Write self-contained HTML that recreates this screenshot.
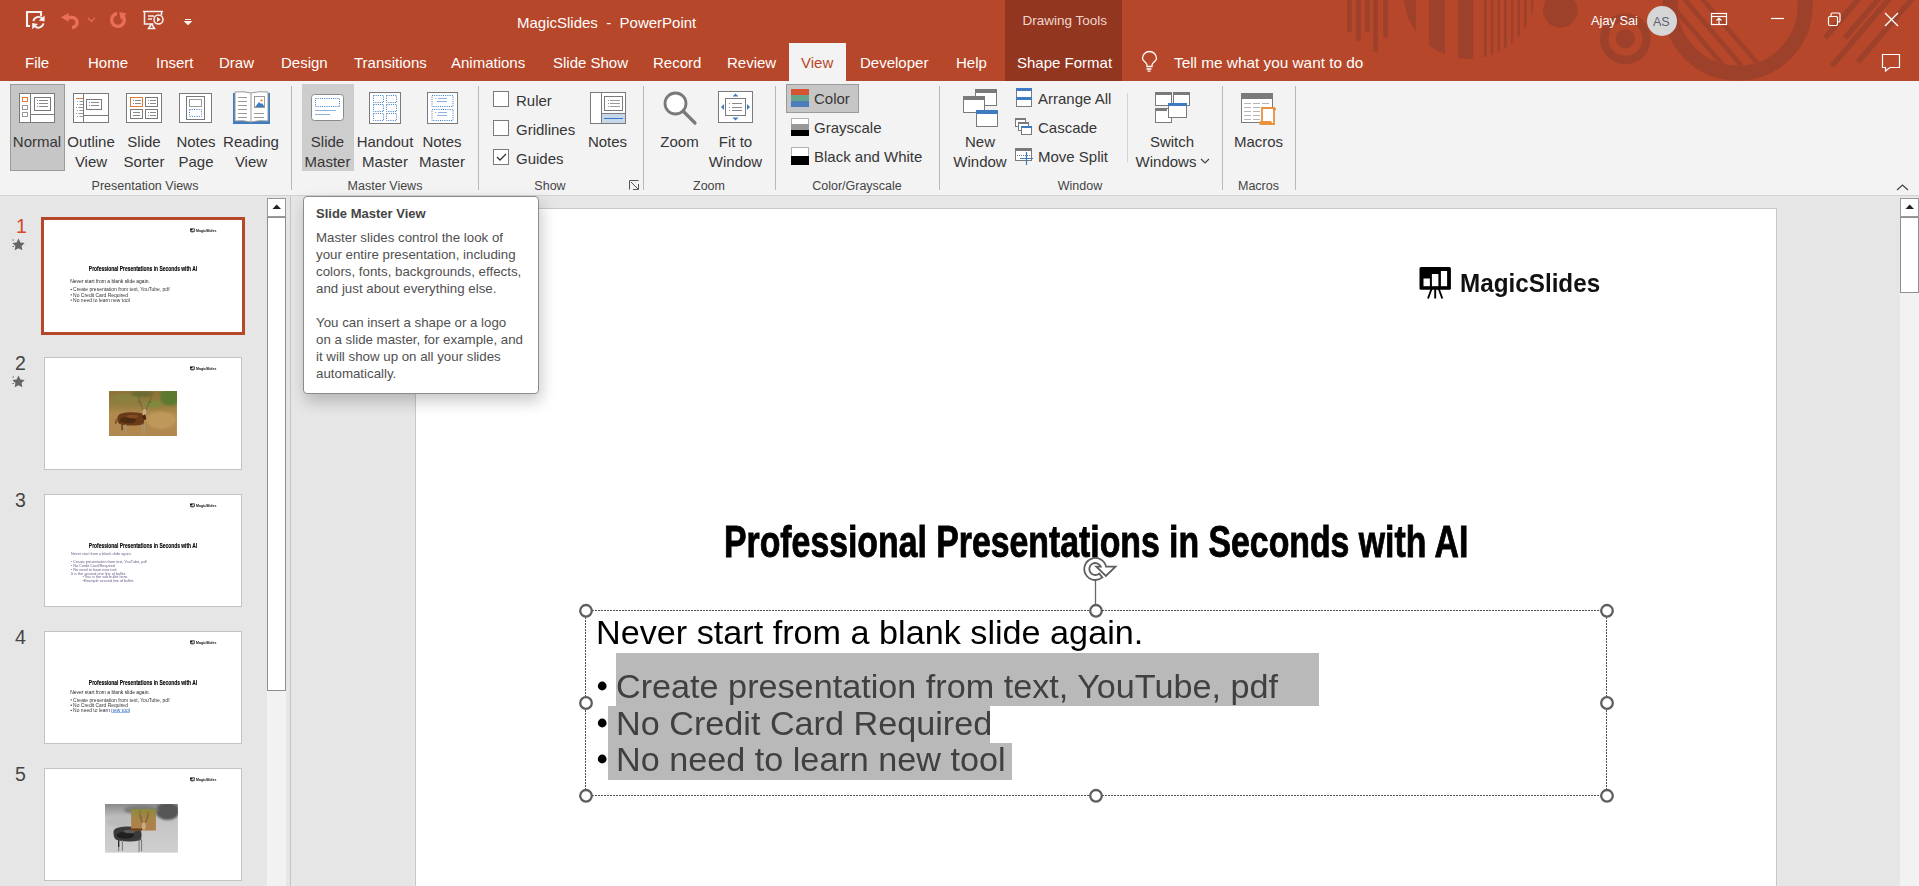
<!DOCTYPE html>
<html><head><meta charset="utf-8">
<style>
*{margin:0;padding:0;box-sizing:border-box}
html,body{width:1919px;height:886px;overflow:hidden;background:#e6e6e6;font-family:"Liberation Sans",sans-serif;position:relative}
.a{position:absolute}
.t{position:absolute;white-space:nowrap;line-height:1}
#top{left:0;top:0;width:1919px;height:81px;background:#b7472a;overflow:hidden}
.tab{position:absolute;top:55px;font-size:15px;color:#fff;line-height:1}
#ribbon{left:0;top:81px;width:1919px;height:115px;background:#f3f3f3;border-bottom:1px solid #d2d2d2}
.lbl{position:absolute;top:179px;font-size:12.5px;color:#444;line-height:1}
.btxt{position:absolute;font-size:15px;color:#444;line-height:20px;text-align:center;white-space:nowrap}
.c{transform:translateX(-50%);font-size:15px;color:#363636}
.rb{font-size:15px;color:#363636}
.lb{top:180px;font-size:12.5px;color:#444}
.num{font-size:19.5px;color:#444}
.thumb{position:absolute;width:198px;height:112px;background:#fff;overflow:hidden}
.thumb.bd{border:1px solid #c3c3c3;width:198px;height:113px}
.thumb.bd .sl{left:-0.7px}
.sl{position:absolute;left:0;top:0;width:1360px;height:765px;transform:scale(0.1456);transform-origin:0 0}
.tipb{font-size:13px;font-weight:700;color:#444}
.tip{font-size:13.3px;color:#505050;line-height:17.05px;white-space:nowrap}
.sep{position:absolute;top:88px;width:1px;height:104px;background:#c8c8c8}
</style></head><body>
<div id="top" class="a">
<svg class="a" style="left:0;top:0" width="1919" height="81">
<g fill="#9d412b">
<rect x="1347" y="0" width="4.7" height="31.7"/><rect x="1356" y="0" width="4.8" height="40.8"/><rect x="1365" y="0" width="4.7" height="31.7"/><rect x="1373.2" y="0" width="4.7" height="51.7"/><rect x="1383.3" y="0" width="4.7" height="37.5"/>
</g>
<defs><clipPath id="hc"><circle cx="1469.5" cy="-6.9" r="65.9"/></clipPath>
<clipPath id="bc"><circle cx="1737.7" cy="5.6" r="60"/></clipPath></defs>
<g fill="#9d412b" clip-path="url(#hc)">
<rect x="1400" y="-10" width="15.8" height="80"/>
<rect x="1429" y="-10" width="16" height="80"/>
<rect x="1458" y="-10" width="15.3" height="80"/>
<rect x="1484" y="-10" width="2.7" height="80"/><rect x="1490.8" y="-10" width="2.5" height="80"/><rect x="1497.5" y="-10" width="2.5" height="80"/><rect x="1504" y="-10" width="2.7" height="80"/><rect x="1511" y="-10" width="2.3" height="80"/><rect x="1517.5" y="-10" width="2.5" height="80"/><rect x="1524" y="-10" width="2.7" height="80"/><rect x="1531" y="-10" width="2.3" height="80"/>
</g>
<circle cx="1560.3" cy="10.25" r="17.25" fill="#9d412b"/>
<circle cx="1625.4" cy="38.75" r="21.25" fill="none" stroke="#9d412b" stroke-width="8.3"/>
<circle cx="1625.4" cy="38.75" r="9.6" fill="#9d412b"/>
<circle cx="1737.7" cy="5.6" r="67.5" fill="none" stroke="#9d412b" stroke-width="15"/>
<g stroke="#9d412b" stroke-width="4.5" clip-path="url(#bc)">
<line x1="1650" y1="-20" x2="1740" y2="85"/><line x1="1668" y1="-20" x2="1758" y2="85"/><line x1="1686" y1="-20" x2="1776" y2="85"/><line x1="1650" y1="10" x2="1720" y2="92"/><line x1="1650" y1="28" x2="1700" y2="86"/>
</g>
<g stroke="#9d412b" stroke-width="5.5">
<line x1="1825" y1="38" x2="1862" y2="-5"/><line x1="1845" y1="38" x2="1882" y2="-5"/><line x1="1832" y1="66" x2="1900" y2="-14"/><line x1="1858" y1="62" x2="1930" y2="-22"/>
</g>
<!-- QAT -->
<path d="M30 26 H27 V12 H41 V18" fill="none" stroke="#f3f3f3" stroke-width="2.1"/>
<circle cx="38.4" cy="22.3" r="6.8" fill="#b7472a"/>
<g fill="none" stroke="#f3f3f3" stroke-width="1.9">
<path d="M33.4 21.2 A5.1 5.1 0 0 1 42.2 18.6"/><path d="M43.4 23.4 A5.1 5.1 0 0 1 34.6 26"/>
</g>
<path d="M44.6 15.5 L44.6 21.6 L38.8 20.6z M32.2 29.2 L32.2 23 L38 24z" fill="#f3f3f3"/>
<path d="M64 17.4 H72 A5.1 5.1 0 0 1 72 27.6" fill="none" stroke="#e96f58" stroke-width="3.5"/>
<path d="M61 17.35 L68.6 13 L68.6 21.8z" fill="#e96f58"/>
<path d="M87.8 17.9 L91.4 21.4 L94.9 17.9" fill="none" stroke="#e96f58" stroke-width="1.3"/>
<path d="M117.02 13.71 A6.35 6.35 0 1 0 121.98 15.14" fill="none" stroke="#e96f58" stroke-width="3.3"/>
<path d="M119.2 12 L126.6 13.6 L120.8 19.8z" fill="#e96f58"/>
<g fill="none" stroke="#f3f3f3" stroke-width="1.5">
<path d="M143 11.5 h20"/><path d="M144.5 12 v12 h9"/><path d="M161.5 12 v3"/>
<path d="M148 16 h6 M148 19 h4"/>
<circle cx="158.5" cy="19.5" r="4.5"/>
<path d="M148.5 28.5 l2.5 -4 h1 l2.5 4z"/>
</g>
<path d="M157 17 v5 l3.5 -2.5z" fill="#f3f3f3"/>
<path d="M185 19.5 h6 M185 21.5 l3 3 l3 -3z" stroke="#f3f3f3" stroke-width="1.2" fill="#f3f3f3"/>
<!-- window controls -->
<g fill="none" stroke="#fff" stroke-width="1.2">
<rect x="1711.5" y="13.5" width="15" height="11"/><path d="M1711.5 16.5 h15"/><path d="M1719 24 v-6 M1716.5 20.5 l2.5 -2.5 l2.5 2.5"/>
<path d="M1771 18.5 h13"/>
<rect x="1828.5" y="16.5" width="9" height="9" rx="1.5"/><path d="M1831 16 v-1.5 a1.5 1.5 0 0 1 1.5 -1.5 h6 a1.5 1.5 0 0 1 1.5 1.5 v6 a1.5 1.5 0 0 1 -1.5 1.5 h-1"/>
<path d="M1885 13 l13 13 M1898 13 l-13 13" stroke-width="1.4"/>
<path d="M1882.5 54.5 h17 v13 h-9.5 l-4.5 3.5 v-3.5 h-3z"/>
</g>
<circle cx="1662" cy="21" r="15" fill="#d6d6d6"/>
<!-- drawing tools box -->
<rect x="1005" y="0" width="117" height="81" fill="#923620"/>
<!-- lightbulb -->
<g fill="none" stroke="#fff" stroke-width="1.3">
<path d="M1147 66.5 v-1.5 c0 -2.5 -4.5 -4 -4.5 -6.5 a7 7 0 0 1 14 0 c0 2.5 -4.5 4 -4.5 6.5 v1.5 z"/><path d="M1146.5 69 h5 M1147.5 71.2 h3"/>
</g>
<!-- view tab -->
<rect x="789" y="43" width="57" height="38" fill="#f3f3f3"/>
</svg>
<div class="t" style="left:517px;top:15px;font-size:15px;color:#fff">MagicSlides&nbsp; - &nbsp;PowerPoint</div>
<div class="t" style="left:1022.5px;top:13.5px;font-size:13.5px;color:#f0d6cf">Drawing Tools</div>
<div class="t" style="left:1591px;top:15px;font-size:12.8px;color:#fff">Ajay Sai</div>
<div class="t" style="left:1653px;top:15.5px;font-size:12.5px;color:#5a6270">AS</div>
<div class="tab" style="left:25px">File</div>
<div class="tab" style="left:88px">Home</div>
<div class="tab" style="left:156px">Insert</div>
<div class="tab" style="left:219px">Draw</div>
<div class="tab" style="left:281px">Design</div>
<div class="tab" style="left:354px">Transitions</div>
<div class="tab" style="left:451px">Animations</div>
<div class="tab" style="left:553px">Slide Show</div>
<div class="tab" style="left:653px">Record</div>
<div class="tab" style="left:727px">Review</div>
<div class="tab" style="left:801px;color:#b7472a">View</div>
<div class="tab" style="left:860px">Developer</div>
<div class="tab" style="left:956px">Help</div>
<div class="tab" style="left:1017px">Shape Format</div>
<div class="tab" style="left:1174px;font-size:15.35px">Tell me what you want to do</div>
</div>

<div id="ribbon" class="a">
<svg class="a" style="left:0;top:0" width="1919" height="114" viewBox="0 81 1919 114">
<!-- selected boxes -->
<rect x="10.5" y="84.5" width="54" height="86" fill="#c6c6c6" stroke="#9a9a9a"/>
<rect x="302" y="84" width="52" height="87" fill="#cdcdcd"/>
<rect x="786.5" y="84.5" width="72" height="28" fill="#c6c6c6" stroke="#9a9a9a"/>
<!-- separators -->
<g fill="#b9b9b9">
<rect x="291" y="86" width="1" height="104"/><rect x="478" y="86" width="1" height="104"/><rect x="643" y="86" width="1" height="104"/><rect x="775" y="86" width="1" height="104"/><rect x="939" y="86" width="1" height="104"/><rect x="1222" y="86" width="1" height="104"/><rect x="1295" y="86" width="1" height="104"/>
</g>
<rect x="1127" y="93" width="1" height="69" fill="#d4d4d4"/>
<!-- Normal icon -->
<g fill="#fff" stroke="#7a7a7a" stroke-width="1">
<rect x="19.5" y="93.5" width="35" height="29"/>
</g>
<g fill="none" stroke="#7a7a7a" stroke-width="1">
<path d="M30.5 94 v28 M31 114.5 h23"/>
<rect x="34.5" y="97.5" width="16" height="13"/>
<path d="M37 100.5 h1 M39 100.5 h9 M37 103.5 h1 M39 103.5 h9 M37 106.5 h1 M39 106.5 h9" stroke="#8a8a8a"/>
<rect x="22.5" y="105.5" width="5" height="4" stroke="#9a9a9a"/>
<rect x="22.5" y="112.5" width="5" height="4" stroke="#9a9a9a"/>
</g>
<rect x="22.5" y="97.5" width="5" height="4" fill="none" stroke="#e07b39"/>
<!-- Outline icon -->
<g fill="#fff" stroke="#7a7a7a"><rect x="73.5" y="93.5" width="35" height="29"/></g>
<g fill="none" stroke="#7a7a7a">
<path d="M83.5 94 v28 M84 115.5 h24"/>
<rect x="86.5" y="99.5" width="15" height="10"/>
<path d="M89 102.5 h1 M91 102.5 h8 M89 105.5 h1 M91 105.5 h8" stroke="#8a8a8a"/>
<path d="M76 98.5 h7 M77 101.5 h6 M77 104.5 h6 M76 107.5 h7 M77 110.5 h6 M76 113.5 h7 M77 116.5 h6" stroke="#9a9a9a" stroke-dasharray="1 1.5 10"/>
</g>
<path d="M76 98.5 h7" stroke="#e07b39"/>
<!-- Slide sorter -->
<rect x="126.5" y="93.5" width="35" height="29" fill="#fff" stroke="#7a7a7a"/>
<rect x="130.5" y="97.5" width="12" height="9" fill="none" stroke="#e07b39"/>
<g fill="none" stroke="#7a7a7a"><rect x="145.5" y="97.5" width="12" height="9"/><rect x="130.5" y="109.5" width="12" height="9"/><rect x="145.5" y="109.5" width="12" height="9"/></g>
<path d="M133 100.5 h1 M135 100.5 h6 M133 103.5 h1 M135 103.5 h6 M148 100.5 h1 M150 100.5 h6 M148 103.5 h1 M150 103.5 h6 M133 112.5 h7 M133 115.5 h7 M148 112.5 h1 M150 112.5 h6 M148 115.5 h1 M150 115.5 h6" stroke="#8a8a8a"/>
<!-- Notes page -->
<rect x="179.5" y="93.5" width="32" height="29" fill="#fff" stroke="#7a7a7a"/>
<rect x="186.5" y="96.5" width="18" height="23" fill="#fff" stroke="#7a7a7a"/>
<rect x="189.5" y="99.5" width="12" height="7" fill="none" stroke="#9a9a9a"/>
<rect x="189.5" y="109.5" width="12" height="7" fill="none" stroke="#3b78c4" stroke-dasharray="1 1.3"/>
<!-- Reading view -->
<path d="M233 93 h3 v29 h34 v-29 h-1 v30 h-36z" fill="#3f7bc1"/>
<rect x="233" y="93" width="37" height="31" fill="#3f7bc1"/>
<path d="M235 92 q8 -1 16 1 q8 -2 17 -1 v29 q-9 -1 -17 1 q-8 -2 -16 -1z" fill="#fff" stroke="#9a9a9a"/>
<path d="M251 93 v29" stroke="#9a9a9a"/>
<path d="M238 97.5 h9 M238 101.5 h9 M238 105.5 h9 M238 109.5 h9 M238 113.5 h9 M238 117.5 h9 M254 113.5 h10 M254 117.5 h10" stroke="#9a9a9a"/>
<rect x="254.5" y="96.5" width="10" height="11" fill="#fff" stroke="#9a9a9a"/>
<path d="M255 107 l4 -5 l2 2 l1 -1 l2 3 v1z" fill="#3f7bc1"/>
<circle cx="261.5" cy="100.5" r="1.3" fill="#e8a657"/>
<!-- Slide master -->
<rect x="311.5" y="94.5" width="32" height="26" rx="3" fill="#fff" stroke="#8a8a8a"/>
<rect x="315.5" y="98.5" width="24" height="8" fill="none" stroke="#3b78c4" stroke-dasharray="1 1.2"/>
<path d="M315 110.5 h21 M315 114.5 h15" stroke="#8fb3df"/>
<!-- handout master -->
<rect x="369.5" y="92.5" width="31" height="31" fill="#fff" stroke="#7a7a7a"/>
<g fill="none" stroke="#3b78c4" stroke-dasharray="1 1.2">
<rect x="373.5" y="95.5" width="10" height="7"/><rect x="386.5" y="95.5" width="10" height="7"/>
<rect x="373.5" y="104.5" width="10" height="7"/><rect x="386.5" y="104.5" width="10" height="7"/>
<rect x="373.5" y="113.5" width="10" height="7"/><rect x="386.5" y="113.5" width="10" height="7"/>
</g>
<!-- notes master -->
<rect x="427.5" y="92.5" width="30" height="31" fill="#fff" stroke="#7a7a7a"/>
<g fill="none" stroke="#3b78c4" stroke-dasharray="1 1.2">
<rect x="432" y="95.5" width="21" height="11"/><rect x="432" y="109.5" width="21" height="11"/>
</g>
<path d="M435 98.5 h1 M438 98.5 h9 M437 101.5 h1 M438 101.5 h9 M435 112.5 h1 M438 112.5 h9 M437 115.5 h1 M438 115.5 h9" stroke="#8fb3df"/>
<!-- checkboxes -->
<g fill="#fff" stroke="#7a7a7a">
<rect x="493.5" y="91.5" width="15" height="15"/><rect x="493.5" y="120.5" width="15" height="15"/><rect x="493.5" y="149.5" width="15" height="15"/>
</g>
<path d="M497 157 l3 3 l6 -6" fill="none" stroke="#333" stroke-width="1.3"/>
<!-- notes icon -->
<rect x="590.5" y="92.5" width="35" height="31" fill="#fff" stroke="#7a7a7a"/>
<path d="M601.5 93 v30" stroke="#7a7a7a"/>
<rect x="602" y="114" width="23" height="9" fill="#c6d7ec"/>
<path d="M602 113.5 h23" stroke="#7a7a7a"/>
<path d="M604 118.5 h19" stroke="#3b78c4"/>
<rect x="604.5" y="96.5" width="18" height="14" fill="#fff" stroke="#7a7a7a"/>
<path d="M608 100.5 h1 M610 100.5 h10 M608 103.5 h1 M610 103.5 h10 M608 106.5 h1 M610 106.5 h10" stroke="#9a9a9a"/>
<!-- dialog launcher -->
<path d="M629.5 189.5 v-9 h9 M631 182 l7 7 M633 189.5 h5.5 v-5.5" fill="none" stroke="#555"/>
<!-- zoom -->
<circle cx="675.5" cy="103.5" r="10.5" fill="#fff" stroke="#7a7a7a" stroke-width="2.8"/>
<path d="M683 111 l12 12" stroke="#7a7a7a" stroke-width="3.2" stroke-linecap="round"/>
<!-- fit to window -->
<rect x="718.5" y="91.5" width="34" height="31" fill="#fff" stroke="#7a7a7a"/>
<rect x="725.5" y="98.5" width="20" height="17" fill="#fff" stroke="#7a7a7a"/>
<path d="M729 103.5 h1 M732 103.5 h10 M729 107.5 h1 M732 107.5 h10 M729 110.5 h1 M732 110.5 h10" stroke="#8a8a8a"/>
<path d="M735.5 93.5 l3 3 h-6z M735.5 120.5 l3 -3 h-6z M721 107 l3 -3 v6z M750 107 l-3 -3 v6z" fill="#3f7bc1"/>
<!-- color swatches -->
<rect x="791" y="89" width="18" height="6" fill="#d55332"/><rect x="791" y="95" width="18" height="6" fill="#67a48c"/><rect x="791" y="101" width="18" height="6" fill="#4a7db9"/>
<rect x="791.5" y="118.5" width="17" height="17" fill="#fff" stroke="#b0b0b0"/>
<rect x="791" y="124" width="18" height="6" fill="#999"/><rect x="791" y="130" width="18" height="6" fill="#000"/>
<rect x="791.5" y="147.5" width="17" height="17" fill="#fff" stroke="#b0b0b0"/>
<rect x="791" y="156" width="18" height="9" fill="#000"/>
<!-- new window -->
<g stroke="#7a7a7a" fill="#fff">
<rect x="975.5" y="89.5" width="21" height="16"/>
<rect x="963.5" y="96.5" width="21" height="16"/>
<rect x="976.5" y="110.5" width="21" height="16"/>
</g>
<rect x="975" y="89" width="22" height="4" fill="#7a7a7a"/><rect x="963" y="96" width="22" height="4" fill="#7a7a7a"/><rect x="976" y="110" width="22" height="4" fill="#3f7bc1"/>
<!-- arrange all -->
<rect x="1016.5" y="88.5" width="15" height="18" fill="#fff" stroke="#7a7a7a"/>
<rect x="1016" y="88" width="16" height="3" fill="#3f7bc1"/><rect x="1016" y="97" width="16" height="3" fill="#3f7bc1"/>
<!-- cascade -->
<g stroke="#7a7a7a" fill="#fff">
<rect x="1015.5" y="118.5" width="10" height="8"/><rect x="1018.5" y="122.5" width="10" height="8"/><rect x="1021.5" y="126.5" width="10" height="8"/>
</g>
<rect x="1015" y="118" width="11" height="2" fill="#7a7a7a"/><rect x="1018" y="122" width="11" height="2" fill="#7a7a7a"/><rect x="1021" y="126" width="11" height="2" fill="#3f7bc1"/>
<!-- move split -->
<rect x="1015.5" y="148.5" width="16" height="12" fill="#fff" stroke="#7a7a7a"/>
<rect x="1015" y="148" width="17" height="3" fill="#7a7a7a"/>
<path d="M1017 155.5 h13" stroke="#7a7a7a" stroke-dasharray="1 1"/>
<path d="M1026.5 152 v13 M1020 158.5 h13" stroke="#3f7bc1" stroke-width="1.2"/>
<!-- switch windows -->
<g stroke="#7a7a7a" fill="#fff">
<rect x="1155.5" y="92.5" width="16" height="13"/><rect x="1173.5" y="92.5" width="16" height="13"/><rect x="1155.5" y="108.5" width="16" height="14"/>
<rect x="1168.5" y="103.5" width="18" height="14"/>
</g>
<rect x="1155" y="92" width="17" height="3" fill="#7a7a7a"/><rect x="1173" y="92" width="17" height="3" fill="#7a7a7a"/><rect x="1155" y="108" width="12" height="3" fill="#7a7a7a"/><rect x="1168" y="103" width="19" height="3" fill="#3f7bc1"/>
<!-- macros -->
<rect x="1241.5" y="93.5" width="31" height="29" fill="#fff" stroke="#7a7a7a"/>
<rect x="1241" y="93" width="32" height="6" fill="#7a7a7a"/>
<path d="M1244 103.5 h26 M1244 107.5 h26 M1244 111.5 h26 M1244 115.5 h20 M1244 119.5 h18" stroke="#b5b5b5" stroke-dasharray="7 2"/>
<path d="M1262 108 h12 v16 h-12z" fill="#fff" stroke="#e8913e" stroke-width="1.8"/>
<rect x="1259" y="121" width="13" height="4" rx="2" fill="#e8913e"/>
<circle cx="1274.5" cy="109" r="1.5" fill="#e8913e"/>
<!-- collapse -->
<path d="M1897 190 l5.5 -5 l5.5 5" fill="none" stroke="#444" stroke-width="1.2"/>
</svg>
</div>
<div class="t c" style="left:37px;top:133.5px">Normal</div>
<div class="t c" style="left:91px;top:133.5px">Outline</div>
<div class="t c" style="left:91px;top:153.8px">View</div>
<div class="t c" style="left:144px;top:133.5px">Slide</div>
<div class="t c" style="left:144px;top:153.8px">Sorter</div>
<div class="t c" style="left:196px;top:133.5px">Notes</div>
<div class="t c" style="left:196px;top:153.8px">Page</div>
<div class="t c" style="left:251px;top:133.5px">Reading</div>
<div class="t c" style="left:251px;top:153.8px">View</div>
<div class="t c" style="left:327.5px;top:133.5px">Slide</div>
<div class="t c" style="left:327.5px;top:153.8px">Master</div>
<div class="t c" style="left:385px;top:133.5px">Handout</div>
<div class="t c" style="left:385px;top:153.8px">Master</div>
<div class="t c" style="left:442px;top:133.5px">Notes</div>
<div class="t c" style="left:442px;top:153.8px">Master</div>
<div class="t rb" style="left:516px;top:92.5px">Ruler</div>
<div class="t rb" style="left:516px;top:121.5px">Gridlines</div>
<div class="t rb" style="left:516px;top:150.5px">Guides</div>
<div class="t c" style="left:607.5px;top:133.5px">Notes</div>
<div class="t c" style="left:679.5px;top:133.5px">Zoom</div>
<div class="t c" style="left:735.5px;top:133.5px">Fit to</div>
<div class="t c" style="left:735.5px;top:153.8px">Window</div>
<div class="t rb" style="left:814px;top:91px">Color</div>
<div class="t rb" style="left:814px;top:120px">Grayscale</div>
<div class="t rb" style="left:814px;top:149px">Black and White</div>
<div class="t c" style="left:980px;top:133.5px">New</div>
<div class="t c" style="left:980px;top:153.8px">Window</div>
<div class="t rb" style="left:1038px;top:91px">Arrange All</div>
<div class="t rb" style="left:1038px;top:120px">Cascade</div>
<div class="t rb" style="left:1038px;top:149px">Move Split</div>
<div class="t c" style="left:1172px;top:133.5px">Switch</div>
<div class="t c" style="left:1166px;top:153.8px">Windows</div>
<svg class="a" style="left:1200px;top:157px" width="10" height="8"><path d="M1 2 l4 4 l4 -4" fill="none" stroke="#444" stroke-width="1.2"/></svg>
<div class="t c" style="left:1258.5px;top:133.5px">Macros</div>
<div class="t c lb" style="left:145px">Presentation Views</div>
<div class="t c lb" style="left:385px">Master Views</div>
<div class="t c lb" style="left:550px">Show</div>
<div class="t c lb" style="left:709px">Zoom</div>
<div class="t c lb" style="left:857px">Color/Grayscale</div>
<div class="t c lb" style="left:1080px">Window</div>
<div class="t c lb" style="left:1258.5px">Macros</div>

<!-- LOWER -->
<div class="a" style="left:0;top:196px;width:1919px;height:690px;background:#e6e6e6"></div>
<!-- left scrollbar -->
<div class="a" style="left:267px;top:198px;width:19px;height:688px;background:#f2f2f2"></div>
<div class="a" style="left:267px;top:198px;width:19px;height:19px;background:#fff;border:1px solid #9a9a9a"></div>
<svg class="a" style="left:272px;top:203px" width="10" height="7"><path d="M0.5 6 L4.7 1.5 L9 6z" fill="#222"/></svg>
<div class="a" style="left:267px;top:217px;width:19px;height:474px;background:#fff;border:1.2px solid #8f8f8f;border-top-width:1.5px"></div>
<div class="a" style="left:290px;top:196px;width:1px;height:690px;background:#c4c4c4"></div>
<!-- right scrollbar -->
<div class="a" style="left:1900px;top:198px;width:19px;height:688px;background:#f2f2f2"></div>
<div class="a" style="left:1900px;top:198px;width:19px;height:19px;background:#fff;border:1px solid #9a9a9a"></div>
<svg class="a" style="left:1905px;top:203px" width="10" height="7"><path d="M0.5 6 L4.7 1.5 L9 6z" fill="#222"/></svg>
<div class="a" style="left:1900px;top:217px;width:19px;height:76px;background:#fff;border:1.2px solid #8f8f8f;border-top-width:1.5px"></div>
<!-- slide numbers -->
<div class="t num" style="left:16px;top:216.5px;color:#d24726">1</div>
<div class="t num" style="left:15px;top:353.5px">2</div>
<div class="t num" style="left:15px;top:490.5px">3</div>
<div class="t num" style="left:15px;top:627.5px">4</div>
<div class="t num" style="left:15px;top:764.5px">5</div>
<svg class="a" style="left:11px;top:237px" width="16" height="14"><path d="M7.5 1.5 l1.9 3.9 l4.3 0.6 l-3.1 3 l0.7 4.2 l-3.8 -2 l-3.8 2 l0.7 -4.2 l-3.1 -3 l4.3 -0.6z" fill="#666"/><path d="M1.5 3 h1.5 M1.5 9.5 h1.5" stroke="#666" stroke-width="1"/></svg>
<svg class="a" style="left:11px;top:374px" width="16" height="14"><path d="M7.5 1.5 l1.9 3.9 l4.3 0.6 l-3.1 3 l0.7 4.2 l-3.8 -2 l-3.8 2 l0.7 -4.2 l-3.1 -3 l4.3 -0.6z" fill="#666"/><path d="M1.5 3 h1.5 M1.5 9.5 h1.5" stroke="#666" stroke-width="1"/></svg>
<!-- thumbnails -->
<div class="a" style="left:41px;top:217px;width:204px;height:118px;background:#b7472a"></div>
<div class="thumb" style="left:44px;top:220px"><div class="sl"><svg class="a" style="left:1000px;top:55px" width="40" height="40" viewBox="1000 55 40 40">
<rect x="1003.5" y="57.9" width="31.4" height="22.8" rx="1.5" fill="#000"/>
<rect x="1007.5" y="69.5" width="6.4" height="7.7" fill="#fff"/><rect x="1015.9" y="65" width="6.5" height="12.2" fill="#fff"/><rect x="1024.9" y="62" width="6.2" height="15.2" fill="#fff"/>
<path d="M1015.5 80 L1012 89.5 M1019.2 80 V89.5 M1022.8 80 L1026.3 89.5" stroke="#000" stroke-width="1.9"/>
</svg>
<div class="t" style="left:1043.7px;top:61.5px;font-size:25px;font-weight:700;color:#111;transform:scaleX(0.97);transform-origin:0 0">MagicSlides</div><div class="t" style="left:307.6px;top:309.7px;font-size:45px;font-weight:700;color:#000;-webkit-text-stroke:0.9px #000;transform:scaleX(0.751);transform-origin:0 0">Professional Presentations in Seconds with AI</div><div class="t" style="left:180.4px;top:407.1px;font-size:33px;transform:scaleX(1.036);transform-origin:0 0;color:#222">Never start from a blank slide again.</div>
<div class="t" style="left:200.4px;top:461.1px;font-size:33px;transform:scaleX(1.036);transform-origin:0 0;color:#333">Create presentation from text, YouTube, pdf</div>
<div class="t" style="left:200.4px;top:497.9px;font-size:33px;transform:scaleX(1.036);transform-origin:0 0;color:#333">No Credit Card Required</div>
<div class="t" style="left:200.4px;top:534.1px;font-size:33px;transform:scaleX(1.036);transform-origin:0 0;color:#333">No need to learn new tool</div>
<svg class="a" style="left:180px;top:470px" width="14" height="90"><circle cx="6.2" cy="7" r="4.4" fill="#000"/><circle cx="6.2" cy="44" r="4.4" fill="#000"/><circle cx="6.2" cy="80" r="4.4" fill="#000"/></svg></div></div>
<div class="thumb bd" style="left:44px;top:357px"><div class="sl"><svg class="a" style="left:1000px;top:55px" width="40" height="40" viewBox="1000 55 40 40">
<rect x="1003.5" y="57.9" width="31.4" height="22.8" rx="1.5" fill="#000"/>
<rect x="1007.5" y="69.5" width="6.4" height="7.7" fill="#fff"/><rect x="1015.9" y="65" width="6.5" height="12.2" fill="#fff"/><rect x="1024.9" y="62" width="6.2" height="15.2" fill="#fff"/>
<path d="M1015.5 80 L1012 89.5 M1019.2 80 V89.5 M1022.8 80 L1026.3 89.5" stroke="#000" stroke-width="1.9"/>
</svg>
<div class="t" style="left:1043.7px;top:61.5px;font-size:25px;font-weight:700;color:#111;transform:scaleX(0.97);transform-origin:0 0">MagicSlides</div><svg class="a" style="left:446px;top:227px" width="467" height="309" viewBox="0 0 467 309">
<defs><linearGradient id="dg" x1="0" y1="0" x2="0" y2="1"><stop offset="0" stop-color="#8d7036"/><stop offset="0.3" stop-color="#927d3e"/><stop offset="0.5" stop-color="#b08a4c"/><stop offset="1" stop-color="#b2874f"/></linearGradient>
<filter id="bl"><feGaussianBlur stdDeviation="6"/></filter></defs>
<rect width="467" height="309" fill="url(#dg)"/>
<g filter="url(#bl)">
<ellipse cx="420" cy="40" rx="70" ry="60" fill="#5b7a2e"/>
<ellipse cx="300" cy="90" rx="60" ry="25" fill="#7d8a3e"/>
<ellipse cx="120" cy="50" rx="110" ry="30" fill="#8a8040"/>
<ellipse cx="230" cy="20" rx="80" ry="20" fill="#6a6a30"/>
</g>
<g filter="url(#bl)" opacity="0.9">
<ellipse cx="360" cy="200" rx="100" ry="60" fill="#c09a5c"/>
</g>
<path d="M232 128 C222 100 210 70 205 40 M215 80 L200 70 M256 128 C262 100 280 70 292 38 M275 80 L292 72" stroke="#6e5034" stroke-width="5" fill="none" stroke-linecap="round"/>
<path d="M60 175 C70 145 150 140 220 150 C240 160 250 200 235 230 C180 240 100 240 70 225 C55 210 55 190 60 175z" fill="#6b3a18"/>
<ellipse cx="130" cy="200" rx="55" ry="22" fill="#4e2a10"/>
<ellipse cx="160" cy="175" rx="40" ry="12" fill="#8a5326" opacity="0.8"/>
<path d="M50 185 l-8 40 l10 -5z" fill="#4e2a10"/>
<ellipse cx="244" cy="148" rx="13" ry="24" fill="#c7ab80"/>
<path d="M230 172 C240 200 250 205 255 190 L250 160z" fill="#3e2210"/>
<path d="M90 225 v70 M115 228 v65 M228 225 v75 M245 225 v70" stroke="#a89676" stroke-width="7"/>
<path d="M90 225 v45" stroke="#4a2a10" stroke-width="8"/>
</svg></div></div>
<div class="thumb bd" style="left:44px;top:494px"><div class="sl"><svg class="a" style="left:1000px;top:55px" width="40" height="40" viewBox="1000 55 40 40">
<rect x="1003.5" y="57.9" width="31.4" height="22.8" rx="1.5" fill="#000"/>
<rect x="1007.5" y="69.5" width="6.4" height="7.7" fill="#fff"/><rect x="1015.9" y="65" width="6.5" height="12.2" fill="#fff"/><rect x="1024.9" y="62" width="6.2" height="15.2" fill="#fff"/>
<path d="M1015.5 80 L1012 89.5 M1019.2 80 V89.5 M1022.8 80 L1026.3 89.5" stroke="#000" stroke-width="1.9"/>
</svg>
<div class="t" style="left:1043.7px;top:61.5px;font-size:25px;font-weight:700;color:#111;transform:scaleX(0.97);transform-origin:0 0">MagicSlides</div><div class="t" style="left:307.6px;top:326px;font-size:45px;font-weight:700;color:#000;-webkit-text-stroke:0.9px #000;transform:scaleX(0.751);transform-origin:0 0">Professional Presentations in Seconds with AI</div>
<div class="t" style="left:185px;top:392px;font-size:26px;color:#6a5a8a">Never start from a blank slide again.</div>
<div class="t" style="left:185px;top:444px;font-size:26px;color:#6a5a8a">&bull; Create presentation from text, YouTube, pdf</div>
<div class="t" style="left:185px;top:471px;font-size:26px;color:#6a5a8a">&bull; No Credit Card Required</div>
<div class="t" style="left:185px;top:499px;font-size:26px;color:#6a5a8a">&bull; No need to learn new tool</div>
<div class="t" style="left:185px;top:526px;font-size:26px;color:#6a5a8a">It is the second one line of bullet.</div>
<div class="t" style="left:265px;top:550px;font-size:26px;color:#6a5a8a">&bull;This is the sub bullet here.</div>
<div class="t" style="left:265px;top:577px;font-size:26px;color:#6a5a8a">&bull;Example second line of bullet.</div></div></div>
<div class="thumb bd" style="left:44px;top:631px"><div class="sl"><svg class="a" style="left:1000px;top:55px" width="40" height="40" viewBox="1000 55 40 40">
<rect x="1003.5" y="57.9" width="31.4" height="22.8" rx="1.5" fill="#000"/>
<rect x="1007.5" y="69.5" width="6.4" height="7.7" fill="#fff"/><rect x="1015.9" y="65" width="6.5" height="12.2" fill="#fff"/><rect x="1024.9" y="62" width="6.2" height="15.2" fill="#fff"/>
<path d="M1015.5 80 L1012 89.5 M1019.2 80 V89.5 M1022.8 80 L1026.3 89.5" stroke="#000" stroke-width="1.9"/>
</svg>
<div class="t" style="left:1043.7px;top:61.5px;font-size:25px;font-weight:700;color:#111;transform:scaleX(0.97);transform-origin:0 0">MagicSlides</div><div class="t" style="left:307.6px;top:326px;font-size:45px;font-weight:700;color:#000;-webkit-text-stroke:0.9px #000;transform:scaleX(0.751);transform-origin:0 0">Professional Presentations in Seconds with AI</div><div class="t" style="left:180.4px;top:398.1px;font-size:33px;transform:scaleX(1.036);transform-origin:0 0;color:#222">Never start from a blank slide again.</div>
<div class="t" style="left:200.4px;top:450.1px;font-size:33px;transform:scaleX(1.036);transform-origin:0 0;color:#333">Create presentation from text, YouTube, pdf</div>
<div class="t" style="left:200.4px;top:486.9px;font-size:33px;transform:scaleX(1.036);transform-origin:0 0;color:#333">No Credit Card Required</div>
<div class="t" style="left:200.4px;top:523.1px;font-size:33px;transform:scaleX(1.036);transform-origin:0 0;color:#333">No need to learn <span style="color:#1f5ec8;text-decoration:underline">new tool</span></div>
<svg class="a" style="left:180px;top:459px" width="14" height="90"><circle cx="6.2" cy="7" r="4.4" fill="#000"/><circle cx="6.2" cy="44" r="4.4" fill="#000"/><circle cx="6.2" cy="80" r="4.4" fill="#000"/></svg></div></div>
<div class="thumb bd" style="left:44px;top:768px"><div class="sl"><svg class="a" style="left:1000px;top:55px" width="40" height="40" viewBox="1000 55 40 40">
<rect x="1003.5" y="57.9" width="31.4" height="22.8" rx="1.5" fill="#000"/>
<rect x="1007.5" y="69.5" width="6.4" height="7.7" fill="#fff"/><rect x="1015.9" y="65" width="6.5" height="12.2" fill="#fff"/><rect x="1024.9" y="62" width="6.2" height="15.2" fill="#fff"/>
<path d="M1015.5 80 L1012 89.5 M1019.2 80 V89.5 M1022.8 80 L1026.3 89.5" stroke="#000" stroke-width="1.9"/>
</svg>
<div class="t" style="left:1043.7px;top:61.5px;font-size:25px;font-weight:700;color:#111;transform:scaleX(0.97);transform-origin:0 0">MagicSlides</div><svg class="a" style="left:418px;top:240px" width="502" height="336" viewBox="0 0 502 336">
<defs><linearGradient id="gg" x1="0" y1="0" x2="0" y2="1"><stop offset="0" stop-color="#8a8a8a"/><stop offset="0.3" stop-color="#c4c4c4"/><stop offset="1" stop-color="#cfcfcf"/></linearGradient>
<filter id="bl5"><feGaussianBlur stdDeviation="7"/></filter></defs>
<rect width="502" height="336" fill="url(#gg)"/>
<g filter="url(#bl5)">
<ellipse cx="430" cy="50" rx="80" ry="60" fill="#555"/>
<ellipse cx="250" cy="40" rx="120" ry="30" fill="#7a7a7a"/>
<ellipse cx="100" cy="120" rx="90" ry="40" fill="#bbb"/>
</g>
<path d="M60 185 C70 155 160 150 230 160 C250 170 260 215 245 250 C190 262 110 262 75 245 C60 230 58 205 60 185z" fill="#3a3a3a"/>
<ellipse cx="140" cy="215" rx="60" ry="24" fill="#1f1f1f"/>
<ellipse cx="170" cy="190" rx="40" ry="12" fill="#666" opacity="0.8"/>
<path d="M95 245 v80 M120 248 v75 M235 245 v85 M252 245 v80" stroke="#777" stroke-width="7"/>
<path d="M95 245 v50" stroke="#222" stroke-width="8"/>
</svg>
<svg class="a" style="left:598px;top:273px" width="171" height="151" viewBox="0 0 171 151">
<defs><linearGradient id="g5" x1="0" y1="0" x2="0" y2="1"><stop offset="0" stop-color="#8c8a3c"/><stop offset="0.5" stop-color="#a98448"/><stop offset="1" stop-color="#b0804c"/></linearGradient></defs>
<rect width="171" height="151" fill="url(#g5)"/>
<path d="M75 95 L60 10 M75 95 L55 40 M100 95 L120 15 M100 95 L125 40" stroke="#7a5a38" stroke-width="5" fill="none"/>
<ellipse cx="88" cy="118" rx="14" ry="26" fill="#c7ab80"/>
<path d="M0 135 h75 v16 h-75z" fill="#6b3a18"/>
</svg></div></div>
<!-- main slide -->
<div class="a" style="left:415px;top:208px;width:1362px;height:700px;background:#fff;border:1px solid #c8c8c8"></div>
<div class="a" style="left:416px;top:209px;width:1360px;height:765px;overflow:hidden">
<div class="sl" style="transform:none"><svg class="a" style="left:1000px;top:55px" width="40" height="40" viewBox="1000 55 40 40">
<rect x="1003.5" y="57.9" width="31.4" height="22.8" rx="1.5" fill="#000"/>
<rect x="1007.5" y="69.5" width="6.4" height="7.7" fill="#fff"/><rect x="1015.9" y="65" width="6.5" height="12.2" fill="#fff"/><rect x="1024.9" y="62" width="6.2" height="15.2" fill="#fff"/>
<path d="M1015.5 80 L1012 89.5 M1019.2 80 V89.5 M1022.8 80 L1026.3 89.5" stroke="#000" stroke-width="1.9"/>
</svg>
<div class="t" style="left:1043.7px;top:61.5px;font-size:25px;font-weight:700;color:#111;transform:scaleX(0.97);transform-origin:0 0">MagicSlides</div> <div class="t" style="left:307.6px;top:309.7px;font-size:45px;font-weight:700;color:#000;-webkit-text-stroke:0.9px #000;transform:scaleX(0.751);transform-origin:0 0">Professional Presentations in Seconds with AI</div>
<div class="a" style="left:200px;top:444px;width:703px;height:53px;background:#b9b9b9"></div>
<div class="a" style="left:192px;top:497px;width:382px;height:37px;background:#b9b9b9"></div>
<div class="a" style="left:192px;top:533.5px;width:404px;height:37px;background:#b9b9b9"></div>
<div class="t" style="left:180.4px;top:407.1px;font-size:33px;transform:scaleX(1.036);transform-origin:0 0;color:#000">Never start from a blank slide again.</div>
<div class="t" style="left:200.4px;top:461.1px;font-size:33px;transform:scaleX(1.036);transform-origin:0 0;color:#404040">Create presentation from text, YouTube, pdf</div>
<div class="t" style="left:200.4px;top:497.9px;font-size:33px;transform:scaleX(1.036);transform-origin:0 0;color:#404040">No Credit Card Required</div>
<div class="t" style="left:200.4px;top:534.1px;font-size:33px;transform:scaleX(1.036);transform-origin:0 0;color:#404040">No need to learn new tool</div>
<svg class="a" style="left:180px;top:470px" width="14" height="90"><circle cx="6.2" cy="7" r="4.4" fill="#000"/><circle cx="6.2" cy="44" r="4.4" fill="#000"/><circle cx="6.2" cy="80" r="4.4" fill="#000"/></svg>
<svg class="a" style="left:0;top:0" width="1360" height="765">
<path d="M170 401.5 H1191 M170 586.5 H1191 M169.5 402 V587 M1190.5 402 V587" fill="none" stroke="#505050" stroke-width="1" stroke-dasharray="2 1"/>
<path d="M679.5 371.5 V395" stroke="#666" stroke-width="1.3"/>
<g fill="#fff" stroke="#5e5e5e" stroke-width="2.3">
<circle cx="170" cy="401.8" r="5.8"/><circle cx="680" cy="401.8" r="5.8"/><circle cx="1191" cy="401.8" r="5.8"/>
<circle cx="170" cy="494" r="5.8"/><circle cx="1191" cy="494" r="5.8"/>
<circle cx="170" cy="586.8" r="5.8"/><circle cx="680" cy="586.8" r="5.8"/><circle cx="1191" cy="586.8" r="5.8"/>
</g>
<g transform="translate(679.3 360)">
<path d="M10.73 -2.4 A 11 11 0 1 0 7.07 8.43 L 3.86 4.6 A 6 6 0 1 1 5.5 -2.4 L 1 -2.4 L 10.6 7 L 20.2 -2.4 Z" fill="#fff" stroke="#5e5e5e" stroke-width="1.8" stroke-linejoin="miter"/>
</g>
</svg>
</div>
</div>
<!-- tooltip -->
<div class="a" style="left:302.5px;top:196px;width:236px;height:197.5px;background:#fff;border:1px solid #8c8c8c;border-radius:4px;box-shadow:2px 7px 16px rgba(0,0,0,0.22)"></div>
<div class="t tipb" style="left:316px;top:207px">Slide Master View</div>
<div class="a tip" style="left:316px;top:229px">Master slides control the look of<br>your entire presentation, including<br>colors, fonts, backgrounds, effects,<br>and just about everything else.<br><br>You can insert a shape or a logo<br>on a slide master, for example, and<br>it will show up on all your slides<br>automatically.</div>

</body></html>
